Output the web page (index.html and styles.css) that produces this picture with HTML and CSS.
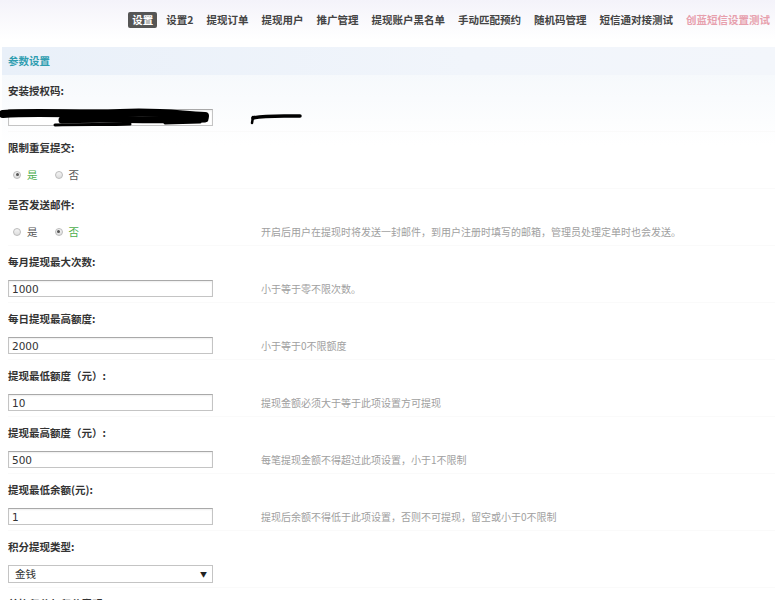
FILE: index.html
```html
<!DOCTYPE html>
<html lang="zh-CN">
<head>
  <meta charset="UTF-8">
  <title>参数设置</title>
  <link rel="stylesheet" href="styles.css">
</head>
<body>

  <!-- 顶部导航 -->
  <div class="topbar">
    <ul class="nav">
      <li class="active">设置</li>
      <li>设置2</li>
      <li>提现订单</li>
      <li>提现用户</li>
      <li>推广管理</li>
      <li>提现账户黑名单</li>
      <li>手动匹配预约</li>
      <li>随机码管理</li>
      <li>短信通对接测试</li>
      <li class="pink">创蓝短信设置测试</li>
    </ul>
  </div>

  <div class="panel">
    <div class="panel-title">参数设置</div>
    <div class="panel-body">

      <div class="row">
        <div class="label">安装授权码:</div>
        <div class="field">
          <div class="control"><input class="text" type="text" value=""></div>
          <!-- 涂黑 -->
          <svg class="redact" width="310" height="24" viewBox="0 0 310 24">
            <g fill="none" stroke="#000" stroke-linecap="round">
              <path d="M3,6 C40,3 80,7 120,5 S180,7 205,8" stroke-width="8"/>
              <path d="M62,12 C100,10 150,13 205,11" stroke-width="7"/>
              <path d="M55,17 C80,16 110,17 130,16" stroke-width="3"/>
              <path d="M165,15 L200,14" stroke-width="3"/>
              <path d="M253,10 C265,7 285,8 300,8" stroke-width="3.5"/>
              <path d="M253,9 L252,15" stroke-width="2.5"/>
            </g>
          </svg>
        </div>
      </div>

      <div class="row">
        <div class="label">限制重复提交:</div>
        <div class="field">
          <div class="control radios">
            <span class="radio on"></span><span class="opt green">是</span>
            <span class="radio"></span><span class="opt">否</span>
          </div>
        </div>
      </div>

      <div class="row">
        <div class="label">是否发送邮件:</div>
        <div class="field">
          <div class="control radios">
            <span class="radio"></span><span class="opt">是</span>
            <span class="radio on"></span><span class="opt green">否</span>
          </div>
          <div class="help">开启后用户在提现时将发送一封邮件，到用户注册时填写的邮箱，管理员处理定单时也会发送。</div>
        </div>
      </div>

      <div class="row">
        <div class="label">每月提现最大次数:</div>
        <div class="field">
          <div class="control"><input class="text" type="text" value="1000"></div>
          <div class="help">小于等于零不限次数。</div>
        </div>
      </div>

      <div class="row">
        <div class="label">每日提现最高额度:</div>
        <div class="field">
          <div class="control"><input class="text" type="text" value="2000"></div>
          <div class="help">小于等于0不限额度</div>
        </div>
      </div>

      <div class="row">
        <div class="label">提现最低额度（元）:</div>
        <div class="field">
          <div class="control"><input class="text" type="text" value="10"></div>
          <div class="help">提现金额必须大于等于此项设置方可提现</div>
        </div>
      </div>

      <div class="row">
        <div class="label">提现最高额度（元）:</div>
        <div class="field">
          <div class="control"><input class="text" type="text" value="500"></div>
          <div class="help">每笔提现金额不得超过此项设置，小于1不限制</div>
        </div>
      </div>

      <div class="row">
        <div class="label">提现最低余额(元):</div>
        <div class="field">
          <div class="control"><input class="text" type="text" value="1"></div>
          <div class="help">提现后余额不得低于此项设置，否则不可提现，留空或小于0不限制</div>
        </div>
      </div>

      <div class="row">
        <div class="label">积分提现类型:</div>
        <div class="field">
          <div class="control">
            <div class="select"><span>金钱</span><span class="arrow">▼</span></div>
          </div>
        </div>
      </div>

      <div class="row">
        <div class="label">兑换积分与积分表明:</div>
        <div class="field">
          <div class="control"><input class="text" type="text" value=""></div>
        </div>
      </div>

    </div>
  </div>

</body>
</html>
```

FILE: styles.css
```css
:root {
  --font:   "Noto Sans CJK SC", "Noto Sans", sans-serif;
  --text:   #333;
  --help:   #a0a0a0;
  --teal:   #2f9db0;
  --green:  #4cae4c;
  --border: #c4c4c4;
}
* { box-sizing: border-box; margin:0; padding:0 }
body {
  font-family: var(--font);
  font-size: 10.5px;
  color: var(--text);
  background: #fff;
  height: 600px;
  overflow: hidden;
}

/* 顶部导航 */
.topbar {
  height: 40px;
  background: linear-gradient(#f4f3fa, #fff);
  display: flex;
  justify-content: flex-end;
  align-items: center;
  padding-right: 1px;
}
.nav { list-style: none; display: flex; gap: 5px; }
.nav li {
  padding: 0 4px;
  line-height: 16px;
  font-weight: 700;
  color: #444;
  border-radius: 2px;
}
.nav li.active { background: #555; color: #fff; }
.nav li.pink { color: #e7a0ad; }

/* 面板 */
.panel { margin: 7px 0 0 2px; }
.panel-title {
  height: 28px;
  line-height: 28px;
  padding-left: 6px;
  font-weight: 700;
  color: var(--teal);
  background: linear-gradient(90deg, #e9f0f9, #f1f5fb 60%, #f3f6fb);
}
.panel-body {
  padding-left: 6px;
  background: linear-gradient(#f6f9fc, #fff 70px);
}

.row {
  height: 57px;
  padding-top: 6px;
  border-bottom: 1px solid #fafafa;
}
.label {
  line-height: 20px;
  font-weight: 700;
  margin-bottom: 8px;
}
.field {
  position: relative;
  display: flex;
  align-items: center;
  height: 17px;
}
.control { width: 253px; flex: none; }
.help { color: var(--help); font-size: 10px; white-space: nowrap; }

input.text {
  display: block;
  width: 205px;
  height: 17px;
  border: 1px solid var(--border);
  border-top-color: #a9a9a9;
  box-shadow: inset 0 1px 2px rgba(0,0,0,.07);
  padding: 0 3px;
  font-family: "DejaVu Sans", sans-serif;
  font-size: 10.5px;
  color: var(--text);
  background: #fff;
}

/* 涂黑的授权码 */
.redact { position: absolute; left: -8px; top: -1px; }

/* 单选 */
.radios { display: flex; align-items: center; padding-left: 5px; }
.radio {
  width: 8px; height: 8px;
  border-radius: 50%;
  border: 1px solid #bbb;
  background: linear-gradient(#f4f4f4, #ddd);
  position: relative;
  margin-right: 6px;
}
.radio.on::after {
  content: "";
  position: absolute; left: 1.5px; top: 1.5px;
  width: 3px; height: 3px;
  border-radius: 50%;
  background: #555;
}
.opt { margin-right: 17px; color: #555; }
.opt.green { color: var(--green); }

/* 下拉 */
.select {
  width: 205px;
  height: 18px;
  border: 1px solid var(--border);
  background: #fff;
  display: flex;
  justify-content: space-between;
  align-items: center;
  padding: 0 5px 0 6px;
}
.select .arrow { font-size: 7px; color: #222; }
```
